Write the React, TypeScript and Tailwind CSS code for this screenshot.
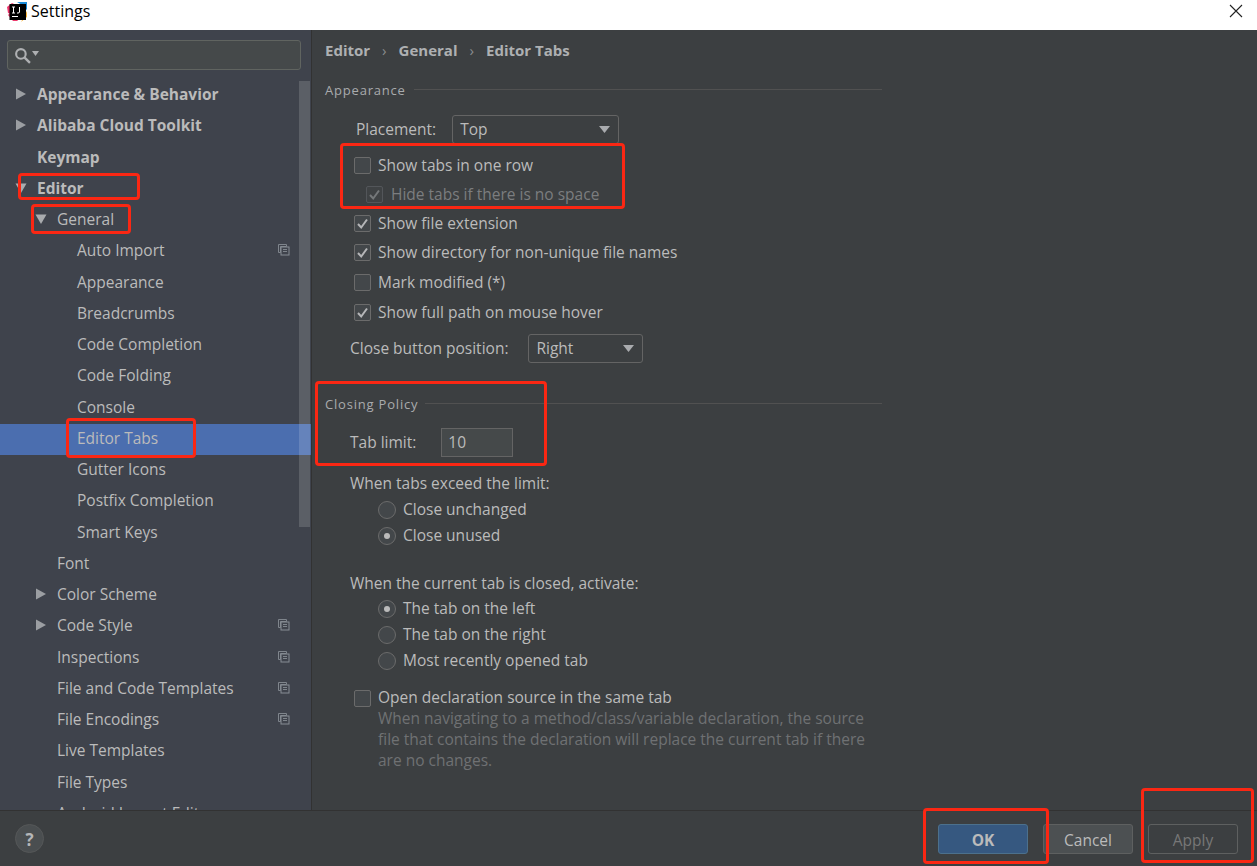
import React from "react";

const navItems = [
  { label: "Appearance & Behavior", depth: 0, arrow: "right", bold: true },
  { label: "Alibaba Cloud Toolkit", depth: 0, arrow: "right", bold: true },
  { label: "Keymap", depth: 0, bold: true },
  { label: "Editor", depth: 0, arrow: "down", bold: true },
  { label: "General", depth: 1, arrow: "down" },
  { label: "Auto Import", depth: 2, copy: true },
  { label: "Appearance", depth: 2 },
  { label: "Breadcrumbs", depth: 2 },
  { label: "Code Completion", depth: 2 },
  { label: "Code Folding", depth: 2 },
  { label: "Console", depth: 2 },
  { label: "Editor Tabs", depth: 2, selected: true },
  { label: "Gutter Icons", depth: 2 },
  { label: "Postfix Completion", depth: 2 },
  { label: "Smart Keys", depth: 2 },
  { label: "Font", depth: 1 },
  { label: "Color Scheme", depth: 1, arrow: "right" },
  { label: "Code Style", depth: 1, arrow: "right", copy: true },
  { label: "Inspections", depth: 1, copy: true },
  { label: "File and Code Templates", depth: 1, copy: true },
  { label: "File Encodings", depth: 1, copy: true },
  { label: "Live Templates", depth: 1 },
  { label: "File Types", depth: 1 },
  { label: "Android Layout Editor", depth: 1 },
];

const Arrow = ({ dir }: { dir: string }) => (
  <svg width="12" height="12" viewBox="0 0 12 12" className="shrink-0">
    {dir === "right" ? (
      <path d="M1 0.5 L11 6 L1 11.5 Z" fill="#9b9ea2" />
    ) : (
      <path d="M0.5 1.5 L11.5 1.5 L6 11 Z" fill="#a9abae" />
    )}
  </svg>
);

const CopyIcon = () => (
  <svg width="12" height="12" viewBox="0 0 12 12" className="absolute right-[21px] top-[8px]">
    <path d="M0.5 0.5 H8.5 V2.5 H2.5 V8.5 H0.5 Z" fill="none" stroke="#7f858c" />
    <rect x="3" y="3" width="8" height="8" fill="none" stroke="#878d94" />
    <path d="M5 5.5 H9 M5 7.5 H9" stroke="#7f858c" />
  </svg>
);

const NavRow = ({ item }: { item: any }) => (
  <div
    className={`relative h-[31.25px] shrink-0 flex items-center pb-[2px] ${item.selected ? "bg-[#4b6eaf]" : ""} ${
      item.depth === 0 ? "pl-[37px]" : item.depth === 1 ? "pl-[57px]" : "pl-[77px]"
    } ${item.bold ? "font-bold" : ""}`}
  >
    {item.arrow && (
      <span className={`absolute top-[8px] ${item.depth === 0 ? "left-[15px]" : "left-[35px]"}`}>
        <Arrow dir={item.arrow} />
      </span>
    )}
    <span className="whitespace-nowrap">{item.label}</span>
    {item.copy && <CopyIcon />}
  </div>
);

const SectionTitle = ({ title, gap }: { title: string; gap: string }) => (
  <div className="flex items-center h-5">
    <span className={`text-[13px] tracking-[0.8px] text-[#a9abad] whitespace-nowrap ${gap}`}>{title}</span>
    <div className="flex-1 h-px bg-[#515151] mb-[4px]" />
  </div>
);

const Check = ({ checked, disabled }: { checked?: boolean; disabled?: boolean }) => (
  <span
    className={`w-[17px] h-[17px] shrink-0 rounded-[2px] border flex items-center justify-center ${
      disabled ? "border-[#53565a] bg-[#3f4244]" : "border-[#6b6b6b] bg-[#43474a]"
    }`}
  >
    {checked && (
      <svg width="13" height="13" viewBox="0 0 13 13">
        <path
          d="M2 7 L5.2 10.5 L11 2.5"
          fill="none"
          stroke={disabled ? "#75787a" : "#b5b6b8"}
          strokeWidth="2"
        />
      </svg>
    )}
  </span>
);

const CheckRow = ({ label, checked, h }: { label: string; checked?: boolean; h: string }) => (
  <div className={`flex items-center gap-[7px] pl-[29px] ${h}`}>
    <Check checked={checked} />
    <span className="whitespace-nowrap">{label}</span>
  </div>
);

const Radio = ({ label, on, h }: { label: string; on?: boolean; h: string }) => (
  <div className={`flex items-center gap-[7px] pl-[53px] ${h}`}>
    <span className="w-[18px] h-[18px] shrink-0 rounded-full border border-[#6b6b6b] bg-[#43474a] flex items-center justify-center">
      {on && <span className="w-[6px] h-[6px] rounded-full bg-[#bbbbbb]" />}
    </span>
    <span className="whitespace-nowrap">{label}</span>
  </div>
);

const Combo = ({ value, width }: { value: string; width: string }) => (
  <div className={`h-[29px] ${width} rounded-[3px] border border-[#646464] bg-[#3c3f41] flex items-center justify-between pl-[7px] pr-[8px]`}>
    <span>{value}</span>
    <svg width="11" height="7" viewBox="0 0 11 7">
      <path d="M0 0 H11 L5.5 7 Z" fill="#a9abae" />
    </svg>
  </div>
);

const FooterButton = ({ label, kind }: { label: string; kind: string }) => (
  <div
    className={`w-[90px] h-[30px] rounded-[3px] border flex items-center justify-center pt-[4px] ${
      kind === "ok"
        ? "bg-[#365880] border-[#4c708c] font-bold text-[#bbbbbb]"
        : kind === "off"
        ? "border-[#5e6060] text-[#777777]"
        : "bg-[#4c5052] border-[#5e6060] text-[#bbbbbb]"
    }`}
  >
    {label}
  </div>
);

const Mark = ({ className }: { className: string }) => (
  <div className={`absolute border-[3px] border-[#fb2713] rounded-[4px] ${className}`} />
);

const App = () => {
  return (
    <div className="relative w-[1257px] h-[866px] overflow-hidden flex flex-col bg-[#3c3f41] text-[#bbbbbb] text-[15.5px] font-['Open_Sans','Noto_Sans',sans-serif]">
      {/* title bar */}
      <div className="h-[30px] shrink-0 bg-white flex items-center pl-[7px] pr-[14px] text-black">
        <svg width="20" height="20" viewBox="0 0 20 20" className="shrink-0 -mt-[7px]">
          <path d="M0 5 L5 1 L9 3 L4 12 L1 11 Z" fill="#f0356c" />
          <path d="M10 0 H20 V8 L15 3 Z" fill="#1b8ddb" />
          <path d="M1 13 L6 19 H11 L4 10 Z" fill="#ee3b6e" />
          <path d="M14 20 L20 15 V9 Z" fill="#f8b133" />
          <rect x="2.5" y="2" width="16.5" height="16" fill="#000000" />
          <rect x="5" y="14" width="6" height="1" fill="#ffffff" />
          <path d="M5 5 H8 M6.5 5 V11 M5 11 H8 M12.5 5 V10 Q12.5 11 11 11 H10" stroke="#ffffff" strokeWidth="1" fill="none" />
        </svg>
        <span className="ml-1 flex-1 -mt-[8px] text-[16px]">Settings</span>
        <svg width="14" height="14" viewBox="0 0 14 14" className="-mt-[8px]">
          <path d="M1 1 L13 13 M13 1 L1 13" stroke="#222222" strokeWidth="1.1" />
        </svg>
      </div>

      <div className="flex-1 flex min-h-0">
        {/* sidebar */}
        <aside className="relative w-[311px] shrink-0 bg-[#3f434c] border-r border-[#323232] box-content overflow-hidden">
          <div className="mx-[7px] mt-[10px] h-[30px] w-[294px] rounded-[3px] border border-[#606460] bg-[#45494a] flex items-center pl-[6px] gap-px">
            <svg width="17" height="17" viewBox="0 0 16 16">
              <circle cx="6.5" cy="6.5" r="4.5" fill="none" stroke="#aeb0b2" strokeWidth="2" />
              <path d="M10 10 L15 15" stroke="#aeb0b2" strokeWidth="2.2" />
            </svg>
            <svg width="7" height="5" viewBox="0 0 7 5" className="-mt-[3px]">
              <path d="M0 0 H7 L3.5 5 Z" fill="#aeb0b2" />
            </svg>
          </div>
          <div className="mt-[10.2px] flex flex-col">
            {navItems.map((item) => (
              <NavRow key={item.label} item={item} />
            ))}
          </div>
          {/* scrollbar lies over the tree */}
          <div className="absolute right-[1px] top-[51px] w-[11px] h-[446px] bg-white/15" />
        </aside>

        {/* main panel */}
        <main className="flex-1 min-w-0 pl-[13px]">
          <div className="w-[557px]">
            <div className="h-[41px] flex items-center gap-[12px] font-bold text-[15px] text-[#aeb0b2]">
              <span>Editor</span>
              <span className="font-normal text-[#8a8c8e]">›</span>
              <span>General</span>
              <span className="font-normal text-[#8a8c8e]">›</span>
              <span>Editor Tabs</span>
            </div>
            <div className="mt-[9px] pt-px">
              <SectionTitle title="Appearance" gap="mr-[8px]" />
            </div>
            <div className="mt-[14px] h-[29px] flex items-center pl-[31px] gap-[16px]">
              <span>Placement:</span>
              <Combo value="Top" width="w-[167px]" />
            </div>
            <CheckRow label="Show tabs in one row" h="h-[29px] mt-[7px]" />
            <div className="flex items-center gap-[8px] pl-[41px] h-[29px] text-[#7b7d7f]">
              <Check checked disabled />
              <span className="whitespace-nowrap">Hide tabs if there is no space</span>
            </div>
            <CheckRow label="Show file extension" checked h="h-[29px]" />
            <CheckRow label="Show directory for non-unique file names" checked h="h-[29.5px]" />
            <CheckRow label="Mark modified (*)" h="h-[30px]" />
            <CheckRow label="Show full path on mouse hover" checked h="h-[30px]" />
            <div className="mt-[6.5px] h-[29px] flex items-center pl-[25px] gap-[20px]">
              <span className="whitespace-nowrap">Close button position:</span>
              <Combo value="Right" width="w-[115px]" />
            </div>
            <div className="mt-[32px]">
              <SectionTitle title="Closing Policy" gap="mr-[7px]" />
            </div>
            <div className="mt-[13px] h-[29px] flex items-center pl-[25px] gap-[25px]">
              <span>Tab limit:</span>
              <div className="w-[72px] h-[29px] border border-[#646464] bg-[#45494a] flex items-center pl-[6px]">10</div>
            </div>
            <div className="mt-[14px] h-[26px] flex items-center pl-[25px]">When tabs exceed the limit:</div>
            <Radio label="Close unchanged" h="h-[26px]" />
            <Radio label="Close unused" on h="h-[25px]" />
            <div className="mt-[23px] h-[25px] flex items-center pl-[25px]">When the current tab is closed, activate:</div>
            <Radio label="The tab on the left" on h="h-[26px]" />
            <Radio label="The tab on the right" h="h-[26px]" />
            <Radio label="Most recently opened tab" h="h-[26px]" />
            <CheckRow label="Open declaration source in the same tab" h="h-[26px] mt-[11px]" />
            <div className="pl-[53px] -mt-[3px] leading-[21px] text-[#6f7173] whitespace-nowrap">
              <div>When navigating to a method/class/variable declaration, the source</div>
              <div>file that contains the declaration will replace the current tab if there</div>
              <div>are no changes.</div>
            </div>
          </div>
        </main>
      </div>

      {/* footer */}
      <footer className="h-[56px] shrink-0 border-t border-[#323232] flex items-center justify-between pl-[15px] pr-[19px]">
        <div className="w-[29px] h-[29px] rounded-full border border-[#555758] bg-[#4a4e50] flex items-center justify-center font-bold text-[17px] text-[#b5b6b8] pt-[2px]">
          ?
        </div>
        <div className="flex gap-[15px]">
          <FooterButton label="OK" kind="ok" />
          <FooterButton label="Cancel" kind="plain" />
          <FooterButton label="Apply" kind="off" />
        </div>
      </footer>

      {/* hand-drawn red annotations on top of the screenshot */}
      <Mark className="left-[18px] top-[173px] w-[122px] h-[27px]" />
      <Mark className="left-[31px] top-[204px] w-[100px] h-[30px]" />
      <Mark className="left-[66px] top-[418px] w-[130px] h-[40px]" />
      <Mark className="left-[340px] top-[143px] w-[285px] h-[66px]" />
      <Mark className="left-[315px] top-[381px] w-[232px] h-[85px]" />
      <Mark className="left-[923px] top-[808px] w-[126px] h-[56px]" />
      <Mark className="left-[1141px] top-[788px] w-[113px] h-[75px]" />
    </div>
  );
};

export default App;
